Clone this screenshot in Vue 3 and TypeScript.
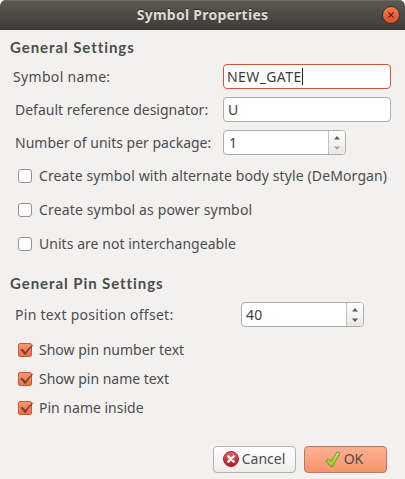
<script setup lang="ts">
import { ref } from 'vue'

interface Option {
  label: string
  key: string
  on: boolean
}

const symbolName = ref('NEW_GATE')
const designator = ref('U')
const units = ref(1)
const offset = ref(40)

const general = ref<Option[]>([
  { label: 'Create symbol with alternate body style (DeMorgan)', key: 'demorgan', on: false },
  { label: 'Create symbol as power symbol', key: 'power', on: false },
  { label: 'Units are not interchangeable', key: 'locked', on: false },
])
const pins = ref<Option[]>([
  { label: 'Show pin number text', key: 'number', on: true },
  { label: 'Show pin name text', key: 'name', on: true },
  { label: 'Pin name inside', key: 'inside', on: true },
])
</script>

<template>
  <main class="dialog">
    <header class="titlebar">
      <h1><span>Symbol Properties</span></h1>
      <button class="close" aria-label="Close">
        <svg width="18" height="18" viewBox="0 0 18 18">
          <path d="M6.4 6.4l5.2 5.2M11.6 6.4l-5.2 5.2" stroke="#59210f" stroke-width="1.3" />
        </svg>
      </button>
    </header>

    <h2 class="first"><span>General Settings</span></h2>
    <div class="row">
      <label class="l-name"><span>Symbol name:</span></label>
      <div class="field focused"><span class="v-name">{{ symbolName }}</span><i class="caret"></i></div>
    </div>
    <div class="row">
      <label class="l-ref"><span>Default reference designator:</span></label>
      <div class="field"><span>{{ designator }}</span></div>
    </div>
    <div class="row">
      <label class="l-units"><span>Number of units per package:</span></label>
      <div class="field spin">
        <span class="num">{{ units }}</span>
        <div class="arrows">
          <svg width="16" height="23" viewBox="0 0 16 23">
            <path d="M5 8.5L8 5l3 3.5z" fill="#5a5a58" />
            <path d="M5 15.5L8 19l3-3.5z" fill="#a9a8a6" />
          </svg>
        </div>
      </div>
    </div>
    <div v-for="o in general" :key="o.key" class="check" :class="o.key" @click="o.on = !o.on">
      <i class="box"></i><span>{{ o.label }}</span>
    </div>

    <h2 class="second"><span>General Pin Settings</span></h2>
    <div class="row offset">
      <label class="l-offset"><span>Pin text position offset:</span></label>
      <div class="field spin">
        <span class="num40">{{ offset }}</span>
        <div class="arrows">
          <svg width="16" height="23" viewBox="0 0 16 23">
            <path d="M5 8.5L8 5l3 3.5z" fill="#5a5a58" />
            <path d="M5 15.5L8 19l3-3.5z" fill="#5a5a58" />
          </svg>
        </div>
      </div>
    </div>
    <div class="pins">
      <div v-for="o in pins" :key="o.key" class="check" :class="o.key" @click="o.on = !o.on">
        <i class="box" :class="{ on: o.on }">
          <svg v-if="o.on" width="18" height="16" viewBox="0 0 18 16">
            <path d="M2.4 6.8L4.4 5.8l2.9 3.3C9.7 5.6 12.4 2.8 16.2 1.2 12.8 4.4 10.2 7.6 8 11.8H6.6z" fill="#784231" />
          </svg>
        </i>
        <span>{{ o.label }}</span>
      </div>
    </div>

    <footer>
      <button class="btn cancel">
        <svg width="16" height="16" viewBox="0 0 16 16">
          <defs>
            <linearGradient id="red" x1="0" y1="0" x2="0" y2="1">
              <stop offset="0" stop-color="#e4606a" />
              <stop offset="1" stop-color="#b8141f" />
            </linearGradient>
          </defs>
          <circle cx="8" cy="8" r="7.5" fill="url(#red)" stroke="#a8222c" />
          <path d="M5.3 5.3l5.4 5.4M10.7 5.3l-5.4 5.4" stroke="#fff" stroke-width="2.4" stroke-linecap="round" />
        </svg>
        <span>Cancel</span>
      </button>
      <button class="btn ok">
        <svg width="16" height="17" viewBox="0 0 16 17">
          <defs>
            <linearGradient id="green" x1="0" y1="0" x2="0" y2="1">
              <stop offset="0" stop-color="#d3e56b" />
              <stop offset="1" stop-color="#94c22d" />
            </linearGradient>
          </defs>
          <path d="M.8 9.7l2.9-1.8 2.2 2.7L12 .9l3 1.2L7.2 15.8H5.6z" fill="url(#green)" stroke="#6c9a22" stroke-linejoin="round" />
        </svg>
        <span>OK</span>
      </button>
    </footer>
  </main>
</template>

<style>
body {
  background: #fff;
}
</style>

<style scoped>
* {
  box-sizing: border-box;
}
.dialog {
  width: 405px;
  height: 479px;
  display: flex;
  flex-direction: column;
  background: #f2f1f0;
  border-radius: 6px 6px 0 0;
  overflow: hidden;
  color: #4c4c4c;
  font: 14px/20px 'Noto Sans', 'Open Sans', sans-serif;
  white-space: nowrap;
}
.titlebar {
  flex: none;
  height: 30px;
  display: grid;
  grid-template-columns: 30px 1fr 30px;
  align-items: center;
  background: linear-gradient(#5b5950, #3d3c37);
  box-shadow: inset 0 1px #69675e;
}
h1 {
  grid-column: 2;
  margin: 0 0 1px;
  text-align: center;
  font-size: 14px;
  line-height: 20px;
  font-weight: 700;
  letter-spacing: 0.25px;
  color: #dfdbd2;
  text-shadow: 0 -1px #2d2c28;
}
.close {
  width: 18px;
  height: 18px;
  margin-left: 7px;
  padding: 0;
  display: flex;
  align-items: center;
  justify-content: center;
  border: 1px solid #34332e;
  border-radius: 50%;
  background: linear-gradient(#f47a55, #e0501f);
}
.close svg {
  flex: none;
}
h2 {
  flex: none;
  margin: 0;
  padding-left: 10px;
  display: flex;
  align-items: center;
  font: 700 15px/20px Lato, sans-serif;
  letter-spacing: 0.93px;
}
.first {
  height: 30px;
  padding-top: 3px;
}
.second {
  height: 38px;
  padding-top: 6px;
}
.row {
  flex: none;
  height: 33px;
  padding: 0 14px 0 15px;
  display: flex;
  align-items: center;
}
.row label {
  width: 208px;
}
.offset {
  height: 31px;
}
.row.offset label {
  width: 226px;
  letter-spacing: 0.28px;
}
.row .l-name {
  width: 210px;
  margin-left: -2px;
  letter-spacing: 0.33px;
}
.field {
  width: 168px;
  height: 25px;
  padding-left: 4px;
  display: flex;
  align-items: center;
  border: 1px solid #b0aca7;
  border-radius: 4px;
  background: #fff;
  color: #3c3c3c;
  overflow: hidden;
}
.focused {
  border-color: #d6572f;
  padding-left: 3px;
}
.v-name {
  letter-spacing: 0.4px;
}
.caret {
  width: 1px;
  height: 17px;
  background: #222;
}
.spin {
  width: 123px;
  padding-left: 5px;
  justify-content: space-between;
}
.arrows {
  width: 17px;
  height: 23px;
  border-left: 1px solid #c4c1bd;
  background: linear-gradient(#fff, #e9e8e6);
}
.arrows svg {
  display: block;
}
.num40 {
  margin-left: -1px;
  letter-spacing: 0.3px;
}
.check {
  flex: none;
  height: 34px;
  padding-left: 18px;
  display: flex;
  align-items: center;
  gap: 7px;
}
.demorgan {
  letter-spacing: 0.12px;
}
.power {
  letter-spacing: 0.15px;
}
.locked {
  letter-spacing: 0.04px;
}
.box {
  flex: none;
  width: 14px;
  height: 14px;
  border: 1px solid #96928d;
  border-radius: 3px;
  background: #fff;
}
.box.on {
  border-color: #c95a35;
  border-radius: 2px;
  background: linear-gradient(#fa9570, #ee7044);
}
.box svg {
  display: block;
  margin: -1px;
}
.pins {
  flex: none;
  padding-top: 6px;
  display: grid;
  gap: 1px;
}
.pins .check {
  height: 28px;
}
footer {
  flex: none;
  margin: 24px 18px 0 0;
  display: flex;
  justify-content: flex-end;
  gap: 8px;
}
.btn {
  width: 83px;
  height: 27px;
  padding: 0 0 1px;
  display: flex;
  align-items: center;
  justify-content: center;
  gap: 3px;
  border: 1px solid #b5b1ac;
  border-radius: 4px;
  background: linear-gradient(#fff, #ededec);
  color: #4c4c4c;
  font: inherit;
}
.cancel {
  padding-right: 1px;
}
.ok {
  border-color: #b97860;
  background: linear-gradient(#fdb090, #f7946d);
  padding-right: 3px;
}
</style>
